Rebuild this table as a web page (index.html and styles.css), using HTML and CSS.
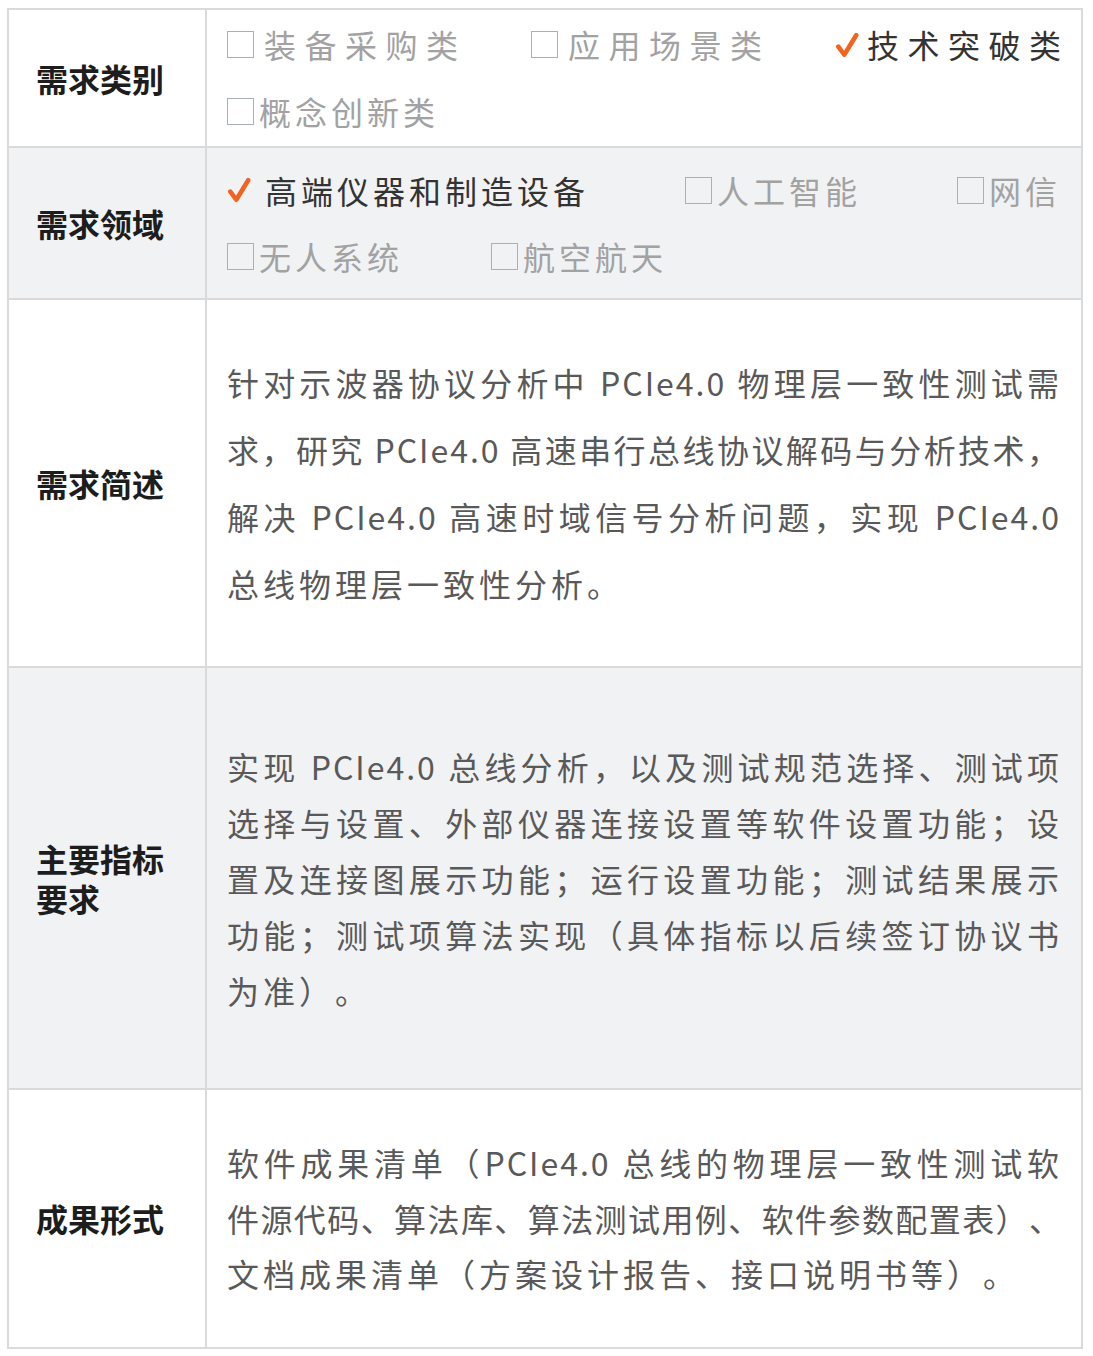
FILE: index.html
```html
<!DOCTYPE html>
<html>
	<head>
		<meta charset="utf-8">
		<title>需求信息</title>
		<link rel="stylesheet" href="styles.css">
	</head>
	<body>
		<table class="req">
			<!--需求类别-->
			<tr>
				<td class="label">需求类别</td>
				<td class="cell opts-top">
					<div class="line spread">
						<span class="opt wide"><i class="box"></i>装备采购类</span>
						<span class="opt wide"><i class="box"></i>应用场景类</span>
						<span class="opt wide on"><svg class="tick" viewBox="0 0 22 24"><path d="M3 13.5 L8.5 21 L19.5 3"/></svg>技术突破类</span>
					</div>
					<div class="line">
						<span class="opt"><i class="box"></i>概念创新类</span>
					</div>
				</td>
			</tr>
			<!--需求领域-->
			<tr class="grey">
				<td class="label">需求领域</td>
				<td class="cell opts-mid">
					<div class="line spread">
						<span class="opt on"><svg class="tick tick-sp" viewBox="0 0 22 24"><path d="M3 13.5 L8.5 21 L19.5 3"/></svg>高端仪器和制造设备</span>
						<span class="opt"><i class="box"></i>人工智能</span>
						<span class="opt"><i class="box"></i>网信</span>
					</div>
					<div class="line gap">
						<span class="opt"><i class="box"></i>无人系统</span>
						<span class="opt"><i class="box"></i>航空航天</span>
					</div>
				</td>
			</tr>
			<!--需求简述-->
			<tr>
				<td class="label">需求简述</td>
				<td class="cell para p1">
					<span class="ln">针对示波器协议分析中 PCIe4.0 物理层一致性测试需</span>
					<span class="ln">求，研究 PCIe4.0 高速串行总线协议解码与分析技术，</span>
					<span class="ln">解决 PCIe4.0 高速时域信号分析问题，实现 PCIe4.0</span>
					<span class="ln end">总线物理层一致性分析。</span>
				</td>
			</tr>
			<!--主要指标要求-->
			<tr class="grey">
				<td class="label">主要指标要求</td>
				<td class="cell para p2">
					<span class="ln">实现 PCIe4.0 总线分析，以及测试规范选择、测试项</span>
					<span class="ln">选择与设置、外部仪器连接设置等软件设置功能；设</span>
					<span class="ln">置及连接图展示功能；运行设置功能；测试结果展示</span>
					<span class="ln">功能；测试项算法实现（具体指标以后续签订协议书</span>
					<span class="ln end">为准）。</span>
				</td>
			</tr>
			<!--成果形式-->
			<tr>
				<td class="label">成果形式</td>
				<td class="cell para p3">
					<span class="ln">软件成果清单（PCIe4.0 总线的物理层一致性测试软</span>
					<span class="ln tight">件源代码、算法库、算法测试用例、软件参数配置表）、</span>
					<span class="ln end">文档成果清单（方案设计报告、接口说明书等）。</span>
				</td>
			</tr>
		</table>
	</body>
</html>
```
FILE: styles.css
```css
  body{
	  margin: 8px 7px;
	  background: #ffffff;
	  font-family: "Noto Sans CJK SC", "Noto Sans", sans-serif;
	  text-spacing-trim: space-all;
  }
  .req{
	  width: 1076px;
	  border-collapse: collapse;
  }
  .req td{
	  border: 2px solid #dadada;
	  vertical-align: middle;
  }
  .grey td{
	  background-color: #f1f2f4;
  }
  .label{
	  width: 142px;
	  padding: 0 27px;
	  font-size: 32px;
	  font-weight: 700;
	  line-height: 40px;
	  color: #1d1d1d;
  }
  .cell{
	  padding: 0 20px;
	  font-size: 32px;
	  color: #595959;
  }

  /* 选项 */
  .opts-top{
	  padding-top: 1px;
	  padding-bottom: 1px;
	  line-height: 67px;
  }
  .opts-mid{
	  padding-top: 9px;
	  padding-bottom: 9px;
	  line-height: 66px;
  }
  .line{
	  display: flex;
	  align-items: center;
  }
  .line.spread{
	  justify-content: space-between;
  }
  .line.gap{
	  gap: 88px;
  }
  .opt{
	  display: inline-flex;
	  align-items: center;
	  color: #a2a2a2;
	  letter-spacing: 4px;
  }
  .opt.wide{
	  letter-spacing: 8.5px;
	  margin-right: -8.5px;
  }
  .opt.on{
	  color: #333333;
  }
  .box{
	  display: inline-block;
	  width: 25px;
	  height: 25px;
	  border: 1.5px solid #aab0ba;
	  margin-right: 5px;
  }
  .opt.wide .box{
	  margin-right: 10px;
  }
  .tick{
	  width: 24px;
	  height: 26px;
	  margin-right: 8px;
  }
  .tick-sp{
	  margin-right: 14px;
  }
  .tick path{
	  fill: none;
	  stroke: #f3621f;
	  stroke-width: 4.2px;
	  stroke-linecap: round;
	  stroke-linejoin: round;
  }

  /* 段落 */
  .para .ln{
	  display: block;
	  text-align: justify;
	  text-align-last: justify;
	  letter-spacing: 2px;
  }
  .para .ln.tight{
	  letter-spacing: 0;
  }
  .para .ln.end{
	  text-align: left;
	  text-align-last: left;
	  letter-spacing: 4px;
  }
  .p1{
	  padding-top: 49px;
	  padding-bottom: 49px;
	  line-height: 67px;
  }
  .p2{
	  padding-top: 70px;
	  padding-bottom: 70px;
	  line-height: 56px;
  }
  .p3{
	  padding-top: 45px;
	  padding-bottom: 45px;
	  line-height: 55.5px;
  }
```
